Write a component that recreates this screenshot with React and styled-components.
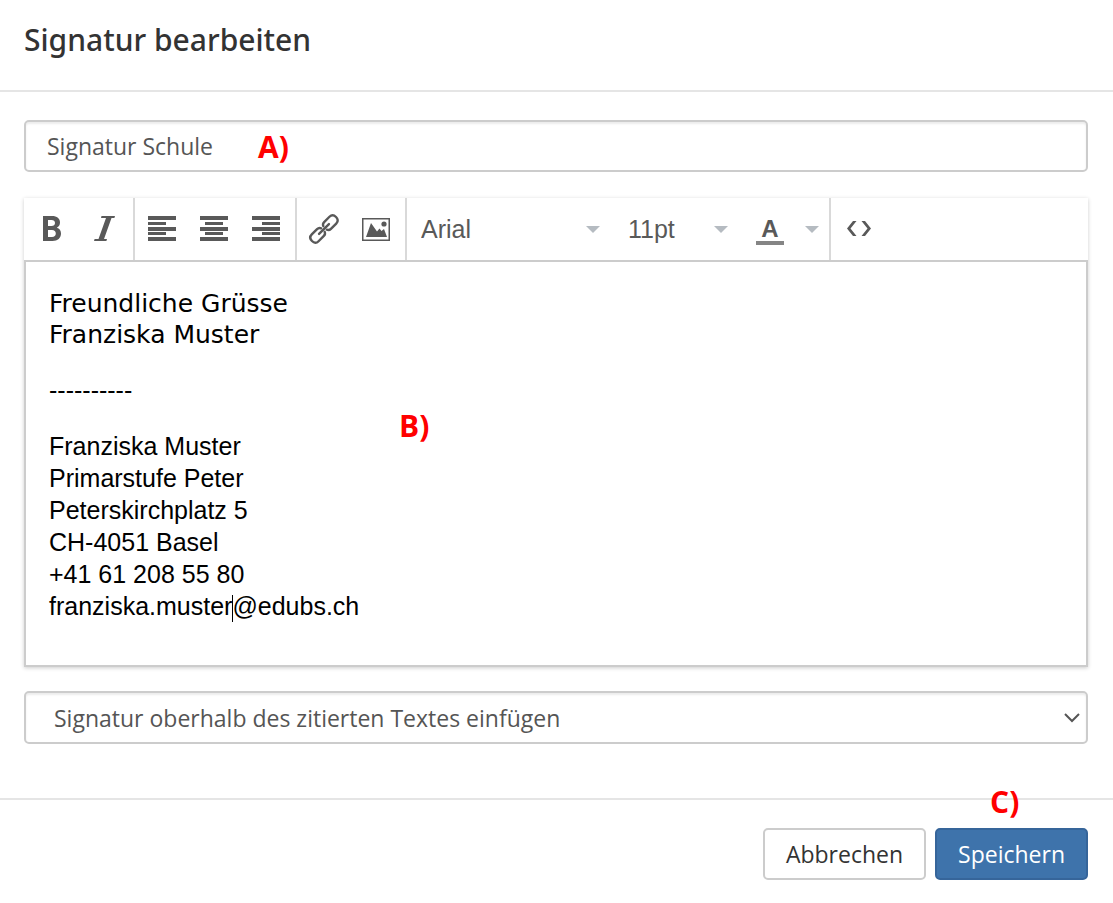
import React, { useState } from 'react';
import styled, { createGlobalStyle } from 'styled-components';

const SENDER = [
  'Franziska Muster',
  'Primarstufe Peter',
  'Peterskirchplatz 5',
  'CH-4051 Basel',
  '+41 61 208 55 80',
];

const GlobalStyle = createGlobalStyle`
  * {
    box-sizing: border-box;
  }
  body {
    margin: 0;
    background-color: #fff;
    font-family: 'Open Sans', sans-serif;
    color: #333;
  }
  button,
  input,
  select {
    font-family: inherit;
    margin: 0;
  }
`;

const AlignIcon = ({ align }) => {
  const x = { left: 0, center: 5, right: 10 }[align];
  return (
    <Icon viewBox="0 0 28 28">
      <path d="M0 1h28v4H0zM0 12h28v4H0zM0 22h28v4H0z" />
      <path d={`M${x} 7h18v3H${x}zM${x} 17h18v3H${x}z`} />
    </Icon>
  );
};

const Caret = () => (
  <CaretIcon viewBox="0 0 14 7">
    <path d="M0 0h14L7 7z" />
  </CaretIcon>
);

const Toolbar = () => (
  <ToolbarRow role="toolbar" aria-label="Formatierung">
    <Group>
      <ToolButton aria-label="Fett">
        <Icon viewBox="0 0 28 28">
          <path
            fillRule="evenodd"
            d="M5 1h9c5 0 8 2.400 8 6.500 0 2.500-1.200 4.300-3.200 5.200 2.700.8 4.200 2.900 4.200 5.800C23 23 19.800 26 14.500 26H5zM10 5v6h3.500c2.200 0 3.500-1.100 3.500-3s-1.300-3-3.500-3zM10 15v7h4c2.400 0 3.800-1.300 3.800-3.500S16.400 15 14 15z"
          />
        </Icon>
      </ToolButton>
      <ToolButton aria-label="Kursiv">
        <Icon viewBox="0 0 28 28">
          <path d="M11.500 1h13.500l-.6 2H21.500l-7.500 21H17l-.6 2H4l.6-2H8.500L16 3H11z" />
        </Icon>
      </ToolButton>
    </Group>
    <Group>
      <ToolButton aria-label="Linksbündig">
        <AlignIcon align="left" />
      </ToolButton>
      <ToolButton aria-label="Zentriert">
        <AlignIcon align="center" />
      </ToolButton>
      <ToolButton aria-label="Rechtsbündig">
        <AlignIcon align="right" />
      </ToolButton>
    </Group>
    <Group>
      <ToolButton aria-label="Link einfügen">
        <Icon viewBox="0 0 28 28">
          <g
            transform="rotate(-45 14 14)"
            fill="none"
            stroke="currentColor"
            strokeWidth="2.400"
            strokeLinecap="round"
          >
            <path d="M12.500 16.500q-1 2.300-3.500 2.300H1.500q-4.500 0-4.500-4.800t4.500-4.800H9q2.500 0 3.500 2.300" />
            <path d="M15.500 11.500q1-2.300 3.500-2.300h7.500q4.500 0 4.500 4.800t-4.500 4.800H19q-2.500 0-3.500-2.300" />
            <path d="M7 14h14" />
          </g>
        </Icon>
      </ToolButton>
      <ToolButton aria-label="Bild einfügen">
        <Icon viewBox="0 0 28 28">
          <path fillRule="evenodd" d="M0 3h28v23H0zM1.500 4.500v20h25v-20z" />
          <path d="M4 22 9 8l6 8.500 2.500-3 2 2.500L22 14l3 8z" />
          <circle cx="22" cy="9" r="2.600" />
        </Icon>
      </ToolButton>
    </Group>
    <FontGroup>
      <FontSelect $width={179} aria-label="Schriftart">
        <select defaultValue="Arial">
          <option>Arial</option>
          <option>Verdana</option>
        </select>
        <Caret />
      </FontSelect>
      <FontSelect $width={100} aria-label="Schriftgrösse">
        <select defaultValue="11pt">
          <option>11pt</option>
          <option>12pt</option>
        </select>
        <Caret />
      </FontSelect>
      <ColorPicker>
        <ColorButton aria-label="Textfarbe">A</ColorButton>
        <CaretButton aria-label="Farbe wählen">
          <Caret />
        </CaretButton>
      </ColorPicker>
    </FontGroup>
    <Group $last>
      <ToolButton aria-label="Quelltext">
        <Icon viewBox="0 0 28 28">
          <path d="M9 6h3.500l-6 7.500 6 7.500H9l-6-7.500zM21 6h-3.500l6 7.500-6 7.500H21l6-7.500z" />
        </Icon>
      </ToolButton>
    </Group>
  </ToolbarRow>
);

const App = () => {
  const [name, setName] = useState('Signatur Schule');

  return (
    <Dialog>
      <GlobalStyle />
      <Header>
        <h1>Signatur bearbeiten</h1>
      </Header>
      <Body>
        <Field>
          <NameInput
            aria-label="Name der Signatur"
            value={name}
            onChange={(e) => setName(e.target.value)}
          />
          <NameMark>A)</NameMark>
        </Field>
        <Editor>
          <Toolbar />
          <Content
            contentEditable
            suppressContentEditableWarning
            spellCheck={false}
            role="textbox"
            aria-label="Signatur"
          >
            <Greeting>
              Freundliche Grüsse
              <br />
              Franziska Muster
            </Greeting>
            <p>----------</p>
            <p>
              {SENDER.map((line) => (
                <React.Fragment key={line}>
                  {line}
                  <br />
                </React.Fragment>
              ))}
              franziska.muster
              <TextCursor />
              @edubs.ch
            </p>
          </Content>
          <EditorMark>B)</EditorMark>
        </Editor>
        <Field>
          <PositionSelect aria-label="Position der Signatur">
            <option>Signatur oberhalb des zitierten Textes einfügen</option>
            <option>Signatur unterhalb des zitierten Textes einfügen</option>
          </PositionSelect>
          <Chevron viewBox="0 0 16 10">
            <path d="M1 1l7 7 7-7" />
          </Chevron>
        </Field>
      </Body>
      <Footer>
        <Button>Abbrechen</Button>
        <SaveArea>
          <Button $primary>Speichern</Button>
          <SaveMark>C)</SaveMark>
        </SaveArea>
      </Footer>
    </Dialog>
  );
};

const Dialog = styled.main`
  background-color: #fff;
`;

const Header = styled.header`
  padding: 20px 24px 30px;
  border-bottom: 2px solid #e5e5e5;
  h1 {
    margin: 0;
    font-family: 'Noto Sans', sans-serif;
    font-size: 30px;
    line-height: 40px;
    font-weight: 500;
  }
`;

const Body = styled.div`
  display: flex;
  flex-direction: column;
  padding: 28px 25px 54px 24px;
`;

const Field = styled.div`
  position: relative;
  display: grid;
  align-items: center;
`;

const NameInput = styled.input`
  width: 100%;
  height: 52px;
  padding: 0 21px;
  border: 2px solid #ccc;
  border-radius: 5px;
  box-shadow: inset 0 2px 2px rgba(0, 0, 0, 0.075);
  background-color: #fff;
  color: #555;
  font-size: 23px;
`;

const PositionSelect = styled.select`
  appearance: none;
  grid-area: 1 / 1;
  width: 100%;
  height: 53px;
  padding: 0 40px 0 28px;
  border: 2px solid #ccc;
  border-radius: 5px;
  box-shadow: inset 0 2px 2px rgba(0, 0, 0, 0.075);
  background-color: #fff;
  color: #555;
  font-size: 23px;
`;

const Chevron = styled.svg`
  grid-area: 1 / 1;
  justify-self: end;
  width: 16px;
  height: 10px;
  margin-right: 8px;
  fill: none;
  stroke: #555;
  stroke-width: 2;
  pointer-events: none;
`;

const Mark = styled.span`
  position: absolute;
  color: #f00;
  font-size: 30px;
  line-height: 36px;
  font-weight: 700;
  pointer-events: none;
`;

const NameMark = styled(Mark)`
  top: 9px;
  left: 234px;
`;

const EditorMark = styled(Mark)`
  top: 210px;
  left: 375px;
`;

const SaveMark = styled(Mark)`
  top: -44px;
  left: 55px;
`;

const Editor = styled.section`
  position: relative;
  margin: 26px 0 24px;
  box-shadow: 0 1px 4px rgba(0, 0, 0, 0.2);
`;

const ToolbarRow = styled.div`
  display: flex;
  height: 62px;
  padding-left: 1px;
  color: #595959;
`;

const Group = styled.div`
  display: flex;
  align-items: center;
  gap: 24px;
  padding: 0 15px 0 13px;
  border-right: ${({ $last }) => ($last ? 'none' : '2px solid #d9d9d9')};
`;

const FontGroup = styled(Group)`
  gap: 28px;
  padding: 0 10px 0 14px;
`;

const ToolButton = styled.button`
  display: flex;
  padding: 0;
  border: none;
  background-color: transparent;
  color: inherit;
`;

const Icon = styled.svg`
  width: 28px;
  height: 28px;
  overflow: visible;
  fill: currentColor;
`;

const CaretIcon = styled.svg`
  width: 14px;
  height: 7px;
  fill: #b5bbc1;
  pointer-events: none;
`;

const FontSelect = styled.label`
  display: grid;
  align-items: center;
  width: ${({ $width }) => $width}px;
  select {
    appearance: none;
    grid-area: 1 / 1;
    width: 100%;
    padding: 0;
    border: none;
    background-color: transparent;
    color: #595959;
    font-family: 'Liberation Sans', sans-serif;
    font-size: 25px;
  }
  svg {
    grid-area: 1 / 1;
    justify-self: end;
  }
`;

const ColorPicker = styled.div`
  display: flex;
  align-items: center;
  gap: 21px;
`;

const ColorButton = styled(ToolButton)`
  justify-content: center;
  width: 28px;
  margin-top: 4px;
  border-bottom: 4px solid #858585;
  font-family: 'Liberation Sans', sans-serif;
  font-size: 24px;
  line-height: 24px;
  font-weight: 700;
`;

const CaretButton = styled(ToolButton)`
  align-items: center;
`;

const Content = styled.div`
  padding: 26px 23px 19px;
  border: 2px solid #ccc;
  outline: none;
  color: #000;
  font-family: 'Liberation Sans', sans-serif;
  font-size: 25px;
  line-height: 32px;
  p {
    margin: 0 0 24px;
  }
`;

const Greeting = styled.p`
  font-family: 'DejaVu Sans', sans-serif;
  line-height: 31px;
`;

const TextCursor = styled.span`
  display: inline-block;
  width: 1px;
  height: 27px;
  margin-right: -1px;
  background-color: #000;
  vertical-align: middle;
`;

const Footer = styled.footer`
  display: flex;
  justify-content: flex-end;
  gap: 9px;
  padding: 28px 25px 24px;
  border-top: 2px solid #e5e5e5;
`;

const SaveArea = styled.div`
  position: relative;
`;

const Button = styled.button`
  height: 52px;
  padding: 0 21px;
  border: 2px solid ${({ $primary }) => ($primary ? '#36659a' : '#ccc')};
  border-radius: 5px;
  background-color: ${({ $primary }) => ($primary ? '#3e73ab' : '#fff')};
  color: ${({ $primary }) => ($primary ? '#fff' : '#333')};
  font-size: 23px;
`;

export default App;
